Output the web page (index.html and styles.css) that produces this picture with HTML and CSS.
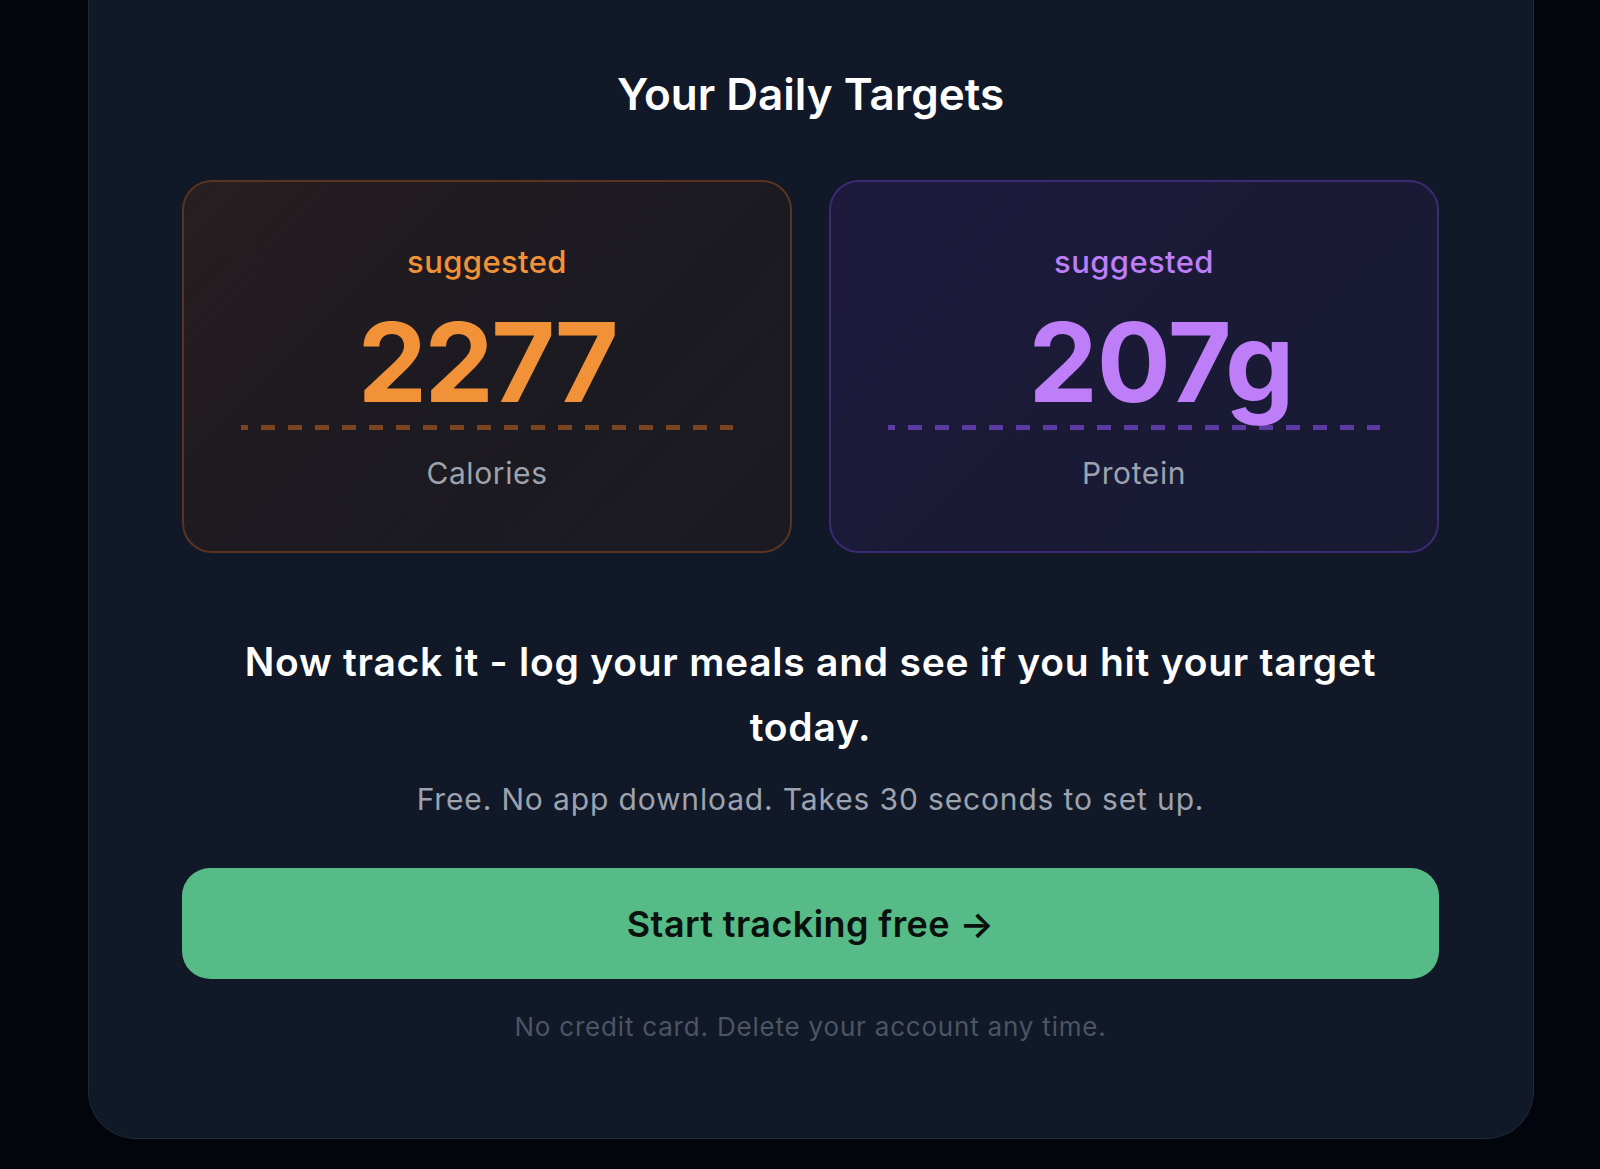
FILE: index.html
```html
<!DOCTYPE html>
<html lang="en">
<head>
  <meta charset="UTF-8" />
  <meta name="viewport" content="width=device-width, initial-scale=1.0"/>
  <title>Your Daily Targets</title>
  <link rel="stylesheet" href="styles.css">
</head>
<body>

<div class="panel">
  <h2 class="title">Your Daily Targets</h2>

  <div class="targets">
    <div class="target target-cal">
      <div class="target-tag">suggested</div>
      <div class="target-value">2277</div>
      <div class="target-rule"></div>
      <div class="target-label">Calories</div>
    </div>
    <div class="target target-pro">
      <div class="target-tag">suggested</div>
      <div class="target-value">207g</div>
      <div class="target-rule"></div>
      <div class="target-label">Protein</div>
    </div>
  </div>

  <p class="pitch">Now track it - log your meals and see if you hit your target today.</p>
  <p class="pitch-sub">Free. No app download. Takes 30 seconds to set up.</p>

  <button class="cta">Start tracking free &rarr;</button>
  <p class="fine">No credit card. Delete your account any time.</p>
</div>

</body>
</html>
```

FILE: styles.css
```css
body {
  margin: 0;
  background: #03050d;
  font-family: 'Inter', 'Noto Sans', sans-serif;
  color: #fff;
}
.panel {
  box-sizing: border-box;
  width: 1446px;
  margin-left: 88px;
  padding: 68px 94px 93px 93px;
  background: #111827;
  border: 1.5px solid #1f2a3a;
  border-top: none;
  border-radius: 0 0 48px 48px;
  text-align: center;
}
.title {
  margin: 0;
  font-size: 44px;
  line-height: 52px;
  font-weight: 600;
}
.targets {
  display: grid;
  grid-template-columns: 1fr 1fr;
  gap: 37px;
  margin-top: 60px;
}
.target {
  padding: 60px 57px 58px;
  border-radius: 30px;
  border: 2px solid;
}
.target-cal {
  background: linear-gradient(135deg, #271e20 0%, #1d1a21 45%, #1b1a22 100%);
  border-color: #5a3421;
}
.target-pro {
  background: linear-gradient(135deg, #1e1a3d 0%, #1a1a36 50%, #181a32 100%);
  border-color: #3c2a74;
}
.target-tag {
  font-size: 31px;
  line-height: 40px;
  font-weight: 500;
  letter-spacing: 0.4px;
}
.target-value {
  margin-top: 25px;
  font-size: 110px;
  line-height: 110px;
  font-weight: 700;
  letter-spacing: -2.5px;
}
.target-pro .target-value {
  padding-left: 54px;
  letter-spacing: -1px;
}
.target-rule {
  height: 5px;
  margin-top: 8px;
  background-position: -7px 0;
}
.target-label {
  margin-top: 23px;
  font-size: 30px;
  line-height: 40px;
  letter-spacing: 0.6px;
  color: #9ca3af;
}
.target-cal .target-tag,
.target-cal .target-value { color: #f29238; }
.target-pro .target-tag,
.target-pro .target-value { color: #bd7ef8; }
.target-cal .target-rule {
  background-image: repeating-linear-gradient(90deg, #7b4420 0 14px, transparent 14px 27px);
}
.target-pro .target-rule {
  background-image: repeating-linear-gradient(90deg, #5c3aa3 0 14px, transparent 14px 27px);
}
.pitch {
  max-width: 1180px;
  margin: 76px auto 0;
  font-size: 39px;
  line-height: 65px;
  font-weight: 600;
  letter-spacing: 0.75px;
}
.pitch-sub {
  margin: 20px 0 0;
  font-size: 30px;
  line-height: 40px;
  letter-spacing: 0.85px;
  color: #9ca3af;
}
.cta {
  display: block;
  width: 100%;
  height: 111px;
  margin-top: 49px;
  border: none;
  border-radius: 28px;
  background: #56bb86;
  color: #0a100d;
  font-family: inherit;
  font-size: 36px;
  font-weight: 600;
  letter-spacing: 0.4px;
  cursor: pointer;
}
.fine {
  margin: 30px 0 0;
  font-size: 26px;
  line-height: 36px;
  letter-spacing: 0.8px;
  color: #4b5563;
}
```
